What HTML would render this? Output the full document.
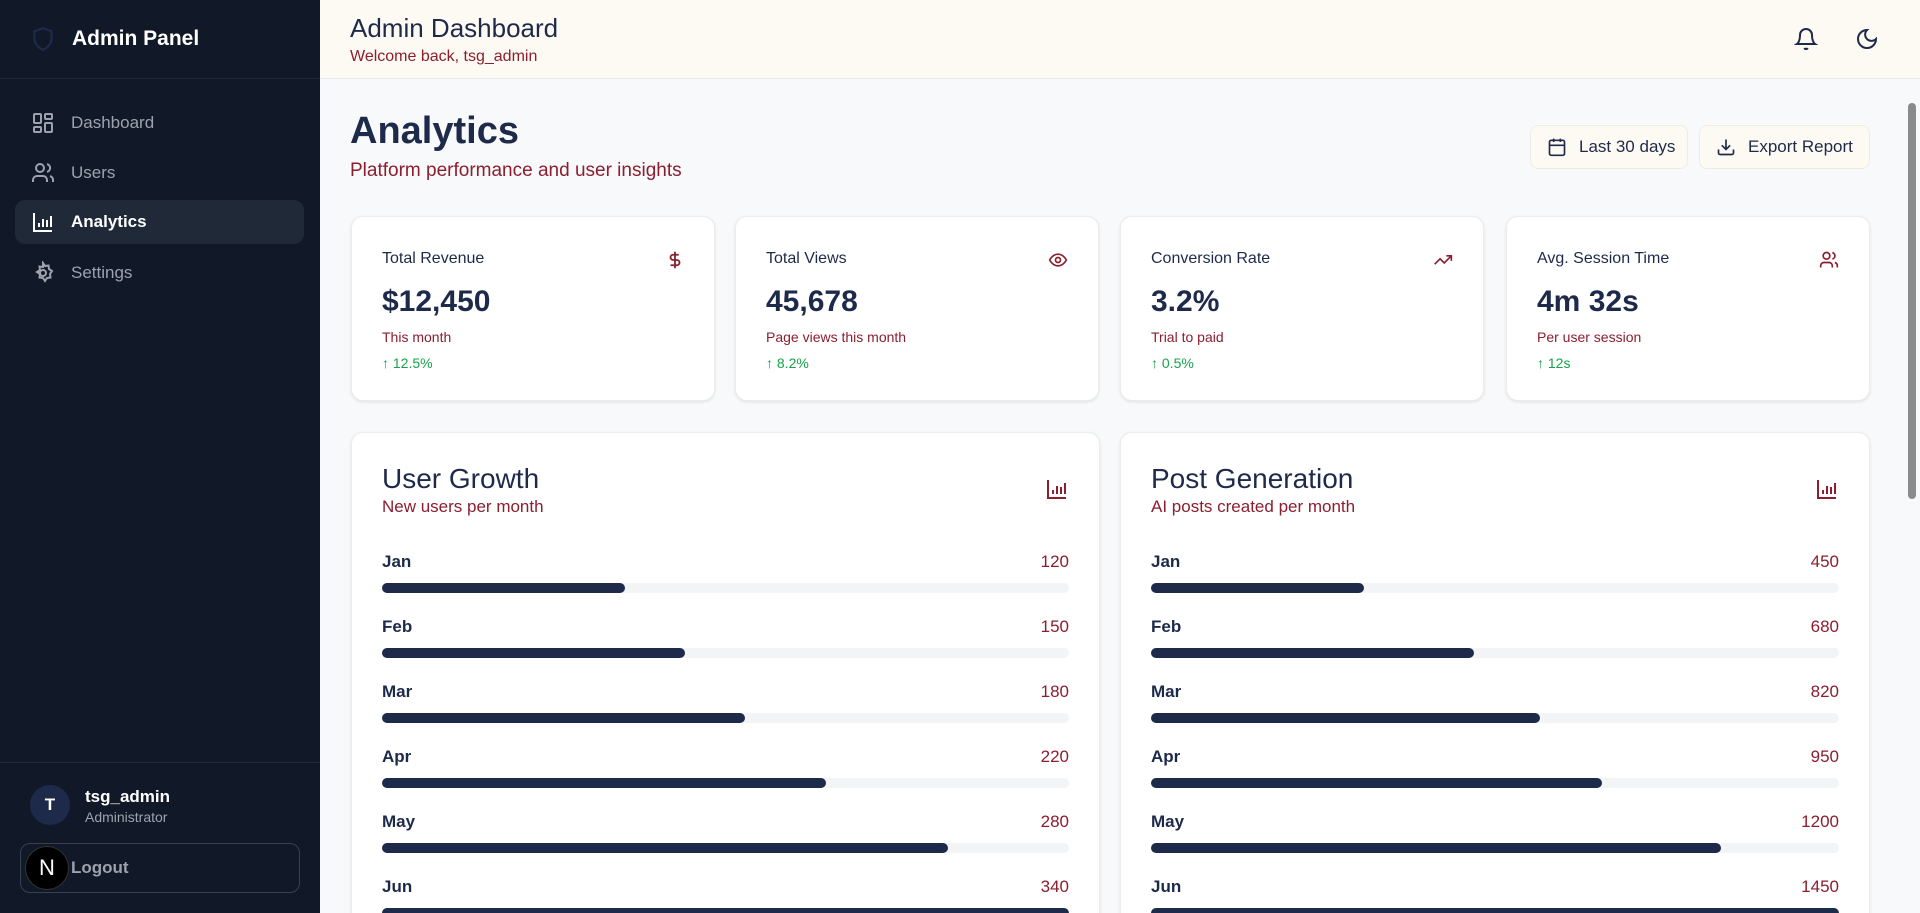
<!DOCTYPE html>
<html style="width:1920px;height:913px;overflow:hidden"><head><meta charset="utf-8"><style>
*{box-sizing:border-box;margin:0;padding:0}
body{width:1920px;height:913px;overflow:hidden;font-family:"Liberation Sans",sans-serif;background:#f8f9fb;position:relative}
.sb{position:absolute;left:0;top:0;width:320px;height:913px;background:#111827;color:#fff}
.brand{height:79px;border-bottom:1px solid #1f2937;display:flex;align-items:center;padding-left:30px;font-size:21px;font-weight:bold}
.brand svg{margin-right:16px}
.nav{position:absolute;left:15px;width:289px;height:44px;border-radius:10px;display:flex;align-items:center;padding-left:16px;font-size:17px;color:#9ca3af}
.nav svg{margin-right:16px}
.nav.act{background:#1f2937;color:#fff;font-weight:bold}
.foot{position:absolute;left:0;top:762px;width:320px;border-top:1px solid #1f2937;height:151px}
.av{position:absolute;left:30px;top:22px;width:40px;height:40px;border-radius:50%;background:#1e2a4a;display:flex;align-items:center;justify-content:center;font-weight:bold;font-size:17px}
.logout{position:absolute;left:20px;top:80px;width:280px;height:50px;border:1px solid #374151;border-radius:10px;color:#9ca3af;font-size:17px;font-weight:bold}
.hdr{position:absolute;left:320px;top:0;right:0;height:79px;background:#fdfaf3;border-bottom:1px solid #e5e7eb}
.main{position:absolute;left:320px;top:79px;right:16px;height:834px;overflow:hidden}
.card{position:absolute;background:#fff;border:1px solid #ececec;border-radius:12px;box-shadow:0 1px 3px rgba(0,0,0,.1)}
.sc .l{position:absolute;left:30px;top:33px;font-size:16px;color:#1e2a4a}
.sc .v{position:absolute;left:30px;top:68px;font-size:30px;font-weight:bold;color:#1e2a4a}
.sc .s{position:absolute;left:30px;top:112px;font-size:14px;color:#8b1e2f}
.sc .t{position:absolute;left:30px;top:138px;font-size:14px;color:#16a34a}
.sc svg{position:absolute;right:30px;top:33px}
.btn{position:absolute;top:46px;height:44px;background:#fdfaf3;border:1px solid #f1ece0;border-radius:8px;display:flex;align-items:center;padding-left:16px;font-size:17px;color:#1e2a4a}
.btn svg{margin-right:12px}
.big h2{position:absolute;left:30px;top:30px;font-size:28px;font-weight:normal;color:#1e2a4a}
.big .sub{position:absolute;left:30px;top:64px;font-size:17px;color:#8b1e2f}
.big .ic{position:absolute;right:30px;top:44px}
.row{position:absolute;left:30px;right:30px;height:40px}
.row .m{position:absolute;left:0;top:0;font-size:17px;font-weight:bold;color:#1e2a4a}
.row .n{position:absolute;right:0;top:0;font-size:17px;color:#8b1e2f}
.row .tr{position:absolute;left:0;right:0;top:31px;height:10px;border-radius:5px;background:#f3f4f6}
.row .f{height:10px;border-radius:5px;background:#1e2a4a}
</style></head><body>
<div class="sb">
<div class="brand"><svg width="26" height="30" viewBox="0 0 24 24" fill="none" stroke="#1e2a4a" stroke-width="2"><path d="M12 2 4 5v6c0 5 3.5 9 8 11 4.5-2 8-6 8-11V5z"/></svg>Admin Panel</div>
<div class="nav" style="top:101px"><svg width="24" height="24" viewBox="0 0 24 24" fill="none" stroke="#9ca3af" stroke-width="2"><rect x="3" y="3" width="7" height="9" rx="1"/><rect x="14" y="3" width="7" height="5" rx="1"/><rect x="14" y="12" width="7" height="9" rx="1"/><rect x="3" y="16" width="7" height="5" rx="1"/></svg>Dashboard</div>
<div class="nav" style="top:151px"><svg width="24" height="24" viewBox="0 0 24 24" fill="none" stroke="#9ca3af" stroke-width="2"><circle cx="9" cy="7" r="4"/><path d="M2 21v-2a4 4 0 0 1 4-4h6a4 4 0 0 1 4 4v2M16 3.1a4 4 0 0 1 0 7.8M22 21v-2a4 4 0 0 0-3-3.9"/></svg>Users</div>
<div class="nav act" style="top:200px"><svg width="24" height="24" viewBox="0 0 24 24" fill="none" stroke="#fff" stroke-width="2"><path d="M3 3v18h18M8 17v-4M12 17V9M16 17v-7M20 17V6"/></svg>Analytics</div>
<div class="nav" style="top:251px"><svg width="24" height="24" viewBox="0 0 24 24" fill="none" stroke="#9ca3af" stroke-width="2"><circle cx="12" cy="12" r="3"/><path d="M12 2l2 3 3.5-.5.5 3.5 3 2-2 3 .5 3.5-3.5.5-2 3-2-3-3.5-.5.5-3.5-3-2 3-2-.5-3.5 3.5.5z"/></svg>Settings</div>
<div class="foot">
<div class="av">T</div>
<div style="position:absolute;left:85px;top:24px;font-size:17px;font-weight:bold">tsg_admin</div>
<div style="position:absolute;left:85px;top:46px;font-size:14px;color:#9ca3af">Administrator</div>
<div class="logout"><div style="position:absolute;left:4px;top:2px;width:44px;height:44px;border-radius:50%;background:#000;border:1px solid #333;color:#fff;font-size:22px;display:flex;align-items:center;justify-content:center;font-weight:normal">N</div><span style="position:absolute;left:50px;top:14px">Logout</span></div>
</div>
</div>
<div class="hdr">
<div style="position:absolute;left:30px;top:13px;font-size:26px;color:#1e2a4a">Admin Dashboard</div>
<div style="position:absolute;left:30px;top:48px;font-size:16px;color:#8b1e2f">Welcome back, tsg_admin</div>
<svg style="position:absolute;left:1474px;top:27px" width="24" height="24" viewBox="0 0 24 24" fill="none" stroke="#1e2a4a" stroke-width="2"><path d="M6 8a6 6 0 0 1 12 0c0 7 3 9 3 9H3s3-2 3-9M10.3 21a1.9 1.9 0 0 0 3.4 0"/></svg>
<svg style="position:absolute;left:1535px;top:27px" width="24" height="24" viewBox="0 0 24 24" fill="none" stroke="#1e2a4a" stroke-width="2"><path d="M12 3a6 6 0 0 0 9 9 9 9 0 1 1-9-9z"/></svg>
</div>
<div style="position:absolute;right:0;top:79px;width:16px;height:834px;background:#f8f9fb"><div style="position:absolute;left:4px;top:24px;width:8px;height:396px;border-radius:4px;background:#8a8a8a"></div></div>
<div class="main">
<div style="position:absolute;left:30px;top:31px;font-size:38px;font-weight:bold;color:#1e2a4a">Analytics</div>
<div style="position:absolute;left:30px;top:81px;font-size:19px;color:#8b1e2f">Platform performance and user insights</div>
<div class="btn" style="left:1210px;width:158px"><svg width="20" height="20" viewBox="0 0 24 24" fill="none" stroke="#1e2a4a" stroke-width="2"><rect x="3" y="4" width="18" height="18" rx="2"/><path d="M16 2v4M8 2v4M3 10h18"/></svg>Last 30 days</div>
<div class="btn" style="left:1379px;width:171px"><svg width="20" height="20" viewBox="0 0 24 24" fill="none" stroke="#1e2a4a" stroke-width="2"><path d="M21 15v4a2 2 0 0 1-2 2H5a2 2 0 0 1-2-2v-4M7 10l5 5 5-5M12 15V3"/></svg>Export Report</div>

<div class="card sc" style="left:31px;top:137px;width:364px;height:185px"><div class="l">Total Revenue</div><svg width="18" height="20" viewBox="0 0 24 24" fill="none" stroke="#8b1e2f" stroke-width="2.4"><path d="M12 1v22M17 5H9.5a3.5 3.5 0 0 0 0 7h5a3.5 3.5 0 0 1 0 7H6"/></svg><div class="v">$12,450</div><div class="s">This month</div><div class="t">↑ 12.5%</div></div>
<div class="card sc" style="left:415px;top:137px;width:364px;height:185px"><div class="l">Total Views</div><svg width="20" height="20" viewBox="0 0 24 24" fill="none" stroke="#8b1e2f" stroke-width="2"><path d="M2 12s3.5-7 10-7 10 7 10 7-3.5 7-10 7S2 12 2 12z"/><circle cx="12" cy="12" r="3"/></svg><div class="v">45,678</div><div class="s">Page views this month</div><div class="t">↑ 8.2%</div></div>
<div class="card sc" style="left:800px;top:137px;width:364px;height:185px"><div class="l">Conversion Rate</div><svg width="20" height="20" viewBox="0 0 24 24" fill="none" stroke="#8b1e2f" stroke-width="2"><path d="M22 7l-8.5 8.5-5-5L2 17M16 7h6v6"/></svg><div class="v">3.2%</div><div class="s">Trial to paid</div><div class="t">↑ 0.5%</div></div>
<div class="card sc" style="left:1186px;top:137px;width:364px;height:185px"><div class="l">Avg. Session Time</div><svg width="20" height="20" viewBox="0 0 24 24" fill="none" stroke="#8b1e2f" stroke-width="2"><circle cx="9" cy="7" r="4"/><path d="M2 21v-2a4 4 0 0 1 4-4h6a4 4 0 0 1 4 4v2M16 3.1a4 4 0 0 1 0 7.8M22 21v-2a4 4 0 0 0-3-3.9"/></svg><div class="v">4m 32s</div><div class="s">Per user session</div><div class="t">↑ 12s</div></div>

<div class="card big" style="left:31px;top:353px;width:749px;height:520px">
<h2>User Growth</h2><div class="sub">New users per month</div>
<svg class="ic" width="24" height="24" viewBox="0 0 24 24" fill="none" stroke="#8b1e2f" stroke-width="2"><path d="M3 3v18h18M8 17v-4M12 17V9M16 17v-7M20 17V6"/></svg>
<div class="row" style="top:119px"><span class="m">Jan</span><span class="n">120</span><div class="tr"><div class="f" style="width:35.3%"></div></div></div>
<div class="row" style="top:184px"><span class="m">Feb</span><span class="n">150</span><div class="tr"><div class="f" style="width:44.1%"></div></div></div>
<div class="row" style="top:249px"><span class="m">Mar</span><span class="n">180</span><div class="tr"><div class="f" style="width:52.9%"></div></div></div>
<div class="row" style="top:314px"><span class="m">Apr</span><span class="n">220</span><div class="tr"><div class="f" style="width:64.7%"></div></div></div>
<div class="row" style="top:379px"><span class="m">May</span><span class="n">280</span><div class="tr"><div class="f" style="width:82.4%"></div></div></div>
<div class="row" style="top:444px"><span class="m">Jun</span><span class="n">340</span><div class="tr"><div class="f" style="width:100%"></div></div></div>
</div>
<div class="card big" style="left:800px;top:353px;width:750px;height:520px">
<h2>Post Generation</h2><div class="sub">AI posts created per month</div>
<svg class="ic" width="24" height="24" viewBox="0 0 24 24" fill="none" stroke="#8b1e2f" stroke-width="2"><path d="M3 3v18h18M8 17v-4M12 17V9M16 17v-7M20 17V6"/></svg>
<div class="row" style="top:119px"><span class="m">Jan</span><span class="n">450</span><div class="tr"><div class="f" style="width:31%"></div></div></div>
<div class="row" style="top:184px"><span class="m">Feb</span><span class="n">680</span><div class="tr"><div class="f" style="width:46.9%"></div></div></div>
<div class="row" style="top:249px"><span class="m">Mar</span><span class="n">820</span><div class="tr"><div class="f" style="width:56.6%"></div></div></div>
<div class="row" style="top:314px"><span class="m">Apr</span><span class="n">950</span><div class="tr"><div class="f" style="width:65.5%"></div></div></div>
<div class="row" style="top:379px"><span class="m">May</span><span class="n">1200</span><div class="tr"><div class="f" style="width:82.8%"></div></div></div>
<div class="row" style="top:444px"><span class="m">Jun</span><span class="n">1450</span><div class="tr"><div class="f" style="width:100%"></div></div></div>
</div>
</div>
</body></html>
